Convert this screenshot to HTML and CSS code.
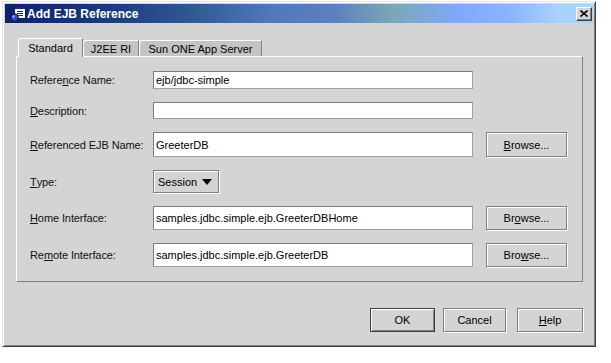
FILE: index.html
```html
<!DOCTYPE html>
<html lang="en">
<head>
    <meta charset="UTF-8">
    <meta name="viewport" content="width=device-width, initial-scale=1.0">
    <title>Add EJB Reference</title>
    <link rel="stylesheet" href="styles.css">
</head>
<body>
    <div class="window">
        <div class="titlebar">
            <svg class="app-icon" width="16" height="16" viewBox="0 0 16 16">
                <rect x="4.5" y="0.5" width="11" height="12" fill="#fff" stroke="#1a1a5a"/>
                <rect x="5" y="1" width="10" height="2" fill="#1a2a8a"/>
                <line x1="7" y1="5.5" x2="13" y2="5.5" stroke="#1a2a8a"/>
                <line x1="7" y1="7.5" x2="13" y2="7.5" stroke="#1a2a8a"/>
                <line x1="7" y1="9.5" x2="13" y2="9.5" stroke="#1a2a8a"/>
                <circle cx="4.5" cy="11.5" r="3.8" fill="#2a4ad0" stroke="#0a0a40"/>
                <circle cx="3.5" cy="10.5" r="1.2" fill="#9ab0ff"/>
            </svg>
            <span class="title">Add EJB Reference</span>
            <div class="close">
                <svg width="8" height="7" viewBox="0 0 8 7">
                    <path d="M0.5 0.5 L7.5 6.5 M7.5 0.5 L0.5 6.5" stroke="#000" stroke-width="1.6"/>
                </svg>
            </div>
        </div>

        <div class="content">
            <div class="tabs">
                <div class="tab active">Standard</div>
                <div class="tab tab-j2ee">J2EE RI</div>
                <div class="tab tab-sun">Sun ONE App Server</div>
            </div>

            <div class="panel">
                <div class="form">
                    <label class="field-label">Refere<u>n</u>ce Name:</label>
                    <div class="text-field">ejb/jdbc-simple</div>
                    <span></span>

                    <label class="field-label"><u>D</u>escription:</label>
                    <div class="text-field"></div>
                    <span></span>

                    <label class="field-label"><u>R</u>eferenced EJB Name:</label>
                    <div class="text-field">GreeterDB</div>
                    <div class="btn"><u>B</u>rowse...</div>

                    <label class="field-label"><u>T</u>ype:</label>
                    <div class="select-cell">
                        <div class="select">Session <span class="arrow"></span></div>
                    </div>
                    <span></span>

                    <label class="field-label"><u>H</u>ome Interface:</label>
                    <div class="text-field">samples.jdbc.simple.ejb.GreeterDBHome</div>
                    <div class="btn">Br<u>o</u>wse...</div>

                    <label class="field-label">Re<u>m</u>ote Interface:</label>
                    <div class="text-field">samples.jdbc.simple.ejb.GreeterDB</div>
                    <div class="btn">Bro<u>w</u>se...</div>
                </div>
            </div>

            <div class="actions">
                <div class="btn btn-default btn-ok">OK</div>
                <div class="btn btn-cancel">Cancel</div>
                <div class="btn btn-help"><u>H</u>elp</div>
            </div>
        </div>
    </div>
</body>
</html>
```

FILE: styles.css
```css
body {
    margin: 0;
    background-color: #fff;
    font-family: 'Liberation Sans', Arial, sans-serif;
    font-size: 11px;
    color: #000;
}

.window {
    margin: 1px 0 0 2px;
    width: 594px;
    height: 346px;
    box-sizing: border-box;
    padding: 2px;
    background-color: #d4d4d4;
    border: 1px solid;
    border-color: #e4e4e4 #404040 #404040 #e4e4e4;
    box-shadow: inset 1px 1px 0 #fff, inset -1px -1px 0 #808080;
}

.titlebar {
    height: 19px;
    display: flex;
    align-items: center;
    padding: 0 1px 0 5px;
    background: linear-gradient(to right,
        #0a246a 0%,
        #1c3a80 18%,
        #2f5a92 32%,
        #5078bc 45%,
        #5a80c0 56%,
        #7aa8b8 66%,
        #80a8ff 78%,
        #8cb4ff 86%,
        #a8d2ff 94%,
        #a8d4ff 100%);
}

.app-icon {
    flex: none;
    margin-right: 1px;
}

.title {
    flex: 1;
    color: #fff;
    font-weight: bold;
    font-size: 12px;
}

.close {
    width: 16px;
    height: 14px;
    box-sizing: border-box;
    display: flex;
    align-items: center;
    justify-content: center;
    background-color: #d4d4d4;
    border: 1px solid;
    border-color: #fff #404040 #404040 #fff;
    box-shadow: inset -1px -1px 0 #808080;
}

.content {
    padding: 15px 10px 0 11px;
}

.tabs {
    display: flex;
    align-items: flex-end;
    height: 18px;
    padding-left: 2px;
}

.tab {
    height: 16px;
    box-sizing: border-box;
    display: flex;
    align-items: center;
    justify-content: center;
    background-color: #c4c4c4;
    border-top: 1px solid #fff;
    border-left: 1px solid #fff;
    border-right: 1px solid #808080;
    border-top-left-radius: 3px;
}

.tab.active {
    position: relative;
    z-index: 1;
    width: 65px;
    height: 19px;
    margin-bottom: -1px;
    padding-bottom: 1px;
    background-color: #d4d4d4;
    border-top-left-radius: 4px;
}

.tab-j2ee {
    width: 56px;
}

.tab-sun {
    width: 123px;
}

.panel {
    height: 226px;
    box-sizing: border-box;
    border: 1px solid;
    border-color: #fff #808080 #808080 #fff;
    padding: 14px 0 0 13px;
}

.form {
    display: grid;
    grid-template-columns: 110px 320px 81px;
    grid-template-rows: 18px 17px 25px 23px 24px 24px;
    column-gap: 13px;
    row-gap: 13px;
}

.field-label {
    display: flex;
    align-items: center;
    white-space: nowrap;
    letter-spacing: -0.1px;
    color: #111;
}

.text-field {
    box-sizing: border-box;
    display: flex;
    align-items: center;
    padding-left: 2px;
    background-color: #fff;
    border: 1px solid;
    border-color: #7c7c7c #a0a0a0 #a0a0a0 #7c7c7c;
    white-space: nowrap;
    overflow: hidden;
}

.select-cell {
    display: flex;
}

.select {
    width: 66px;
    box-sizing: border-box;
    display: flex;
    align-items: center;
    gap: 5px;
    padding-left: 4px;
    border: 1px solid #808080;
    box-shadow: inset 1px 1px 0 #fff, 1px 1px 0 #fff;
}

.arrow {
    width: 0;
    height: 0;
    border-left: 5px solid transparent;
    border-right: 5px solid transparent;
    border-top: 6px solid #000;
}

.btn {
    box-sizing: border-box;
    display: flex;
    align-items: center;
    justify-content: center;
    border: 1px solid #808080;
    box-shadow: inset 1px 1px 0 #fff, 1px 1px 0 #fff;
}

.actions {
    display: flex;
    justify-content: flex-end;
    gap: 8px;
    margin-top: 26px;
}

.actions .btn {
    height: 24px;
}

.btn-default {
    border-color: #404040;
    box-shadow: inset 1px 1px 0 #fff, inset -1px -1px 0 #808080;
}

.btn-ok {
    width: 65px;
}

.btn-cancel {
    width: 63px;
}

.btn-help {
    width: 66px;
    margin-left: 3px;
}
```
